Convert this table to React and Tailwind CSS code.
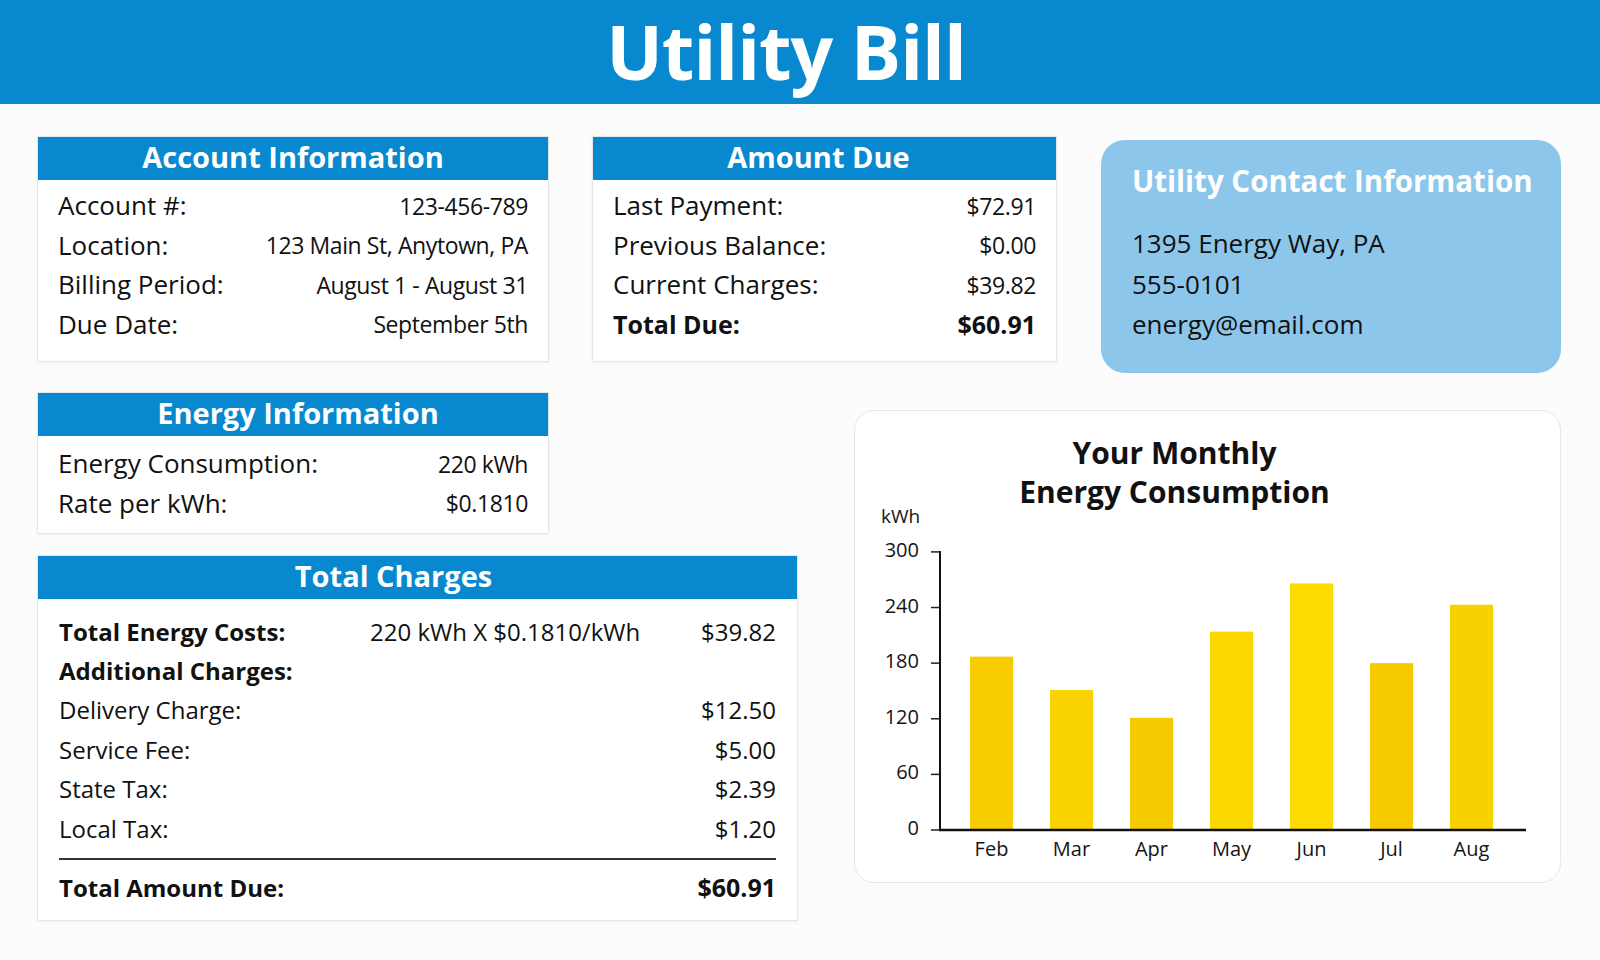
const FONT = { fontFamily: '"Open Sans", "Liberation Sans", sans-serif' };

const ACCOUNT_ROWS = [
  ["Account #:", "123-456-789"],
  ["Location:", "123 Main St, Anytown, PA"],
  ["Billing Period:", "August 1 - August 31"],
  ["Due Date:", "September 5th"],
];

const AMOUNT_ROWS = [
  ["Last Payment:", "$72.91"],
  ["Previous Balance:", "$0.00"],
  ["Current Charges:", "$39.82"],
];

const EXTRA_CHARGES = [
  ["Delivery Charge:", "$12.50"],
  ["Service Fee:", "$5.00"],
  ["State Tax:", "$2.39"],
  ["Local Tax:", "$1.20"],
];

const USAGE = [
  { month: "Feb", kwh: 187, color: "#f8cd00" },
  { month: "Mar", kwh: 151, color: "#f9d200" },
  { month: "Apr", kwh: 121, color: "#f6ca00" },
  { month: "May", kwh: 214, color: "#fad800" },
  { month: "Jun", kwh: 266, color: "#fbdb00" },
  { month: "Jul", kwh: 180, color: "#f7ca00" },
  { month: "Aug", kwh: 243, color: "#f8d200" },
];

const TICKS = [300, 240, 180, 120, 60, 0];
const BASE_Y = 319;
const SCALE = 0.927;

function Section({ title, titleClass = "", className = "", children }) {
  return (
    <div
      className={`border border-[#e4e6e9] bg-white shadow-[0_1px_3px_rgba(0,0,0,0.05)] ${className}`}
    >
      <div
        className={`flex h-[43px] items-center justify-center bg-[#0788cf] pb-[4px] text-[29px] font-bold text-white ${titleClass}`}
      >
        {title}
      </div>
      {children}
    </div>
  );
}

function Row({ label, value, bold = false }) {
  return (
    <div className="flex h-[39.5px] items-center justify-between text-[#111]">
      <span className={bold ? "text-[25px] font-bold" : "text-[26px]"}>{label}</span>
      <span className={bold ? "text-[25px] font-bold" : "text-[23px] tracking-[-0.4px]"}>
        {value}
      </span>
    </div>
  );
}

function UsageChart() {
  return (
    <svg width="707" height="356" className="overflow-visible">
      <text x="26" y="12" fontSize="19" fill="#151515">
        kWh
      </text>
      {TICKS.map((t) => {
        const y = BASE_Y - t * SCALE;
        return (
          <g key={t}>
            <line x1="76" x2="85" y1={y} y2={y} stroke="#222" strokeWidth="1.5" />
            <text x="64" y={y - 2} dy="0.35em" textAnchor="end" fontSize="20" fill="#151515">
              {t}
            </text>
          </g>
        );
      })}
      {USAGE.map((d, i) => {
        const x = 115 + i * 80;
        const h = d.kwh * SCALE;
        return (
          <g key={d.month}>
            <rect x={x} y={BASE_Y - h} width="43" height={h} fill={d.color} />
            <text x={x + 21.5} y="338" dy="0.35em" textAnchor="middle" fontSize="20" fill="#151515">
              {d.month}
            </text>
          </g>
        );
      })}
      <line x1="85" x2="85" y1="40" y2={BASE_Y + 1} stroke="#111" strokeWidth="2" />
      <line x1="84" x2="671" y1={BASE_Y} y2={BASE_Y} stroke="#111" strokeWidth="2.5" />
    </svg>
  );
}

export default function App() {
  return (
    <div className="h-[960px] w-[1600px] overflow-hidden bg-[#fcfcfc]" style={FONT}>
      <header className="flex h-[104px] items-center justify-center bg-[#0788cf] pb-[2px] pr-[28px]">
        <h1 className="text-[75px] font-bold leading-none tracking-[-1px] text-white">
          Utility Bill
        </h1>
      </header>

      <div className="px-[37px] pt-[32px]">
        <div className="flex items-start">
          <Section title="Account Information" className="w-[512px]">
            <div className="px-[20px] pb-[17px] pt-[6px]">
              {ACCOUNT_ROWS.map(([l, v]) => (
                <Row key={l} label={l} value={v} />
              ))}
            </div>
          </Section>

          <Section title="Amount Due" titleClass="pr-[12px]" className="ml-[43px] w-[465px]">
            <div className="px-[20px] pb-[17px] pt-[6px]">
              {AMOUNT_ROWS.map(([l, v]) => (
                <Row key={l} label={l} value={v} />
              ))}
              <Row label="Total Due:" value="$60.91" bold />
            </div>
          </Section>

          <div className="ml-[44px] mt-[4px] h-[233px] w-[460px] rounded-[24px] bg-[#8cc7eb] pl-[31px] pt-[23px]">
            <div className="whitespace-nowrap text-[29.5px] font-bold leading-[36px] text-white">
              Utility Contact Information
            </div>
            <div className="mt-[24px] text-[26px] leading-[40.5px] text-[#111]">
              <div>1395 Energy Way, PA</div>
              <div>555-0101</div>
              <div>energy@email.com</div>
            </div>
          </div>
        </div>

        <div className="mt-[19px] flex items-start">
          <div className="w-[761px]">
            <Section title="Energy Information" titleClass="pl-[10px]" className="w-[512px]">
              <div className="px-[20px] pb-[10px] pt-[8px]">
                <Row label="Energy Consumption:" value="220 kWh" />
                <Row label="Rate per kWh:" value="$0.1810" />
              </div>
            </Section>

            <Section title="Total Charges" titleClass="pr-[48px]" className="mt-[21px] w-[761px]">
              <div className="px-[21px] pb-[12px] pt-[13px] text-[#111]">
                <div className="grid h-[39px] grid-cols-[311px_1fr_auto] items-center">
                  <span className="text-[24px] font-bold">Total Energy Costs:</span>
                  <span className="text-[24px]">220 kWh X $0.1810/kWh</span>
                  <span className="text-[24px]">$39.82</span>
                </div>
                <div className="flex h-[39.5px] items-center text-[24px] font-bold">
                  Additional Charges:
                </div>
                {EXTRA_CHARGES.map(([l, v]) => (
                  <div key={l} className="flex h-[39.5px] items-center justify-between text-[24px]">
                    <span>{l}</span>
                    <span>{v}</span>
                  </div>
                ))}
                <div className="mt-[9px] h-[2px] bg-[#333]" />
                <div className="mt-[8px] flex h-[40px] items-center justify-between text-[24px] font-bold">
                  <span>Total Amount Due:</span>
                  <span className="text-[25px]">$60.91</span>
                </div>
              </div>
            </Section>
          </div>

          <div className="ml-[56px] mt-[18px] h-[473px] w-[707px] rounded-[20px] border border-[#e6e7ea] bg-white">
            <div className="pr-[66px] pt-[22px] text-center text-[30px] font-bold leading-[39px] text-[#111]">
              <div>Your Monthly</div>
              <div>Energy Consumption</div>
            </div>
            <UsageChart />
          </div>
        </div>
      </div>
    </div>
  );
}
